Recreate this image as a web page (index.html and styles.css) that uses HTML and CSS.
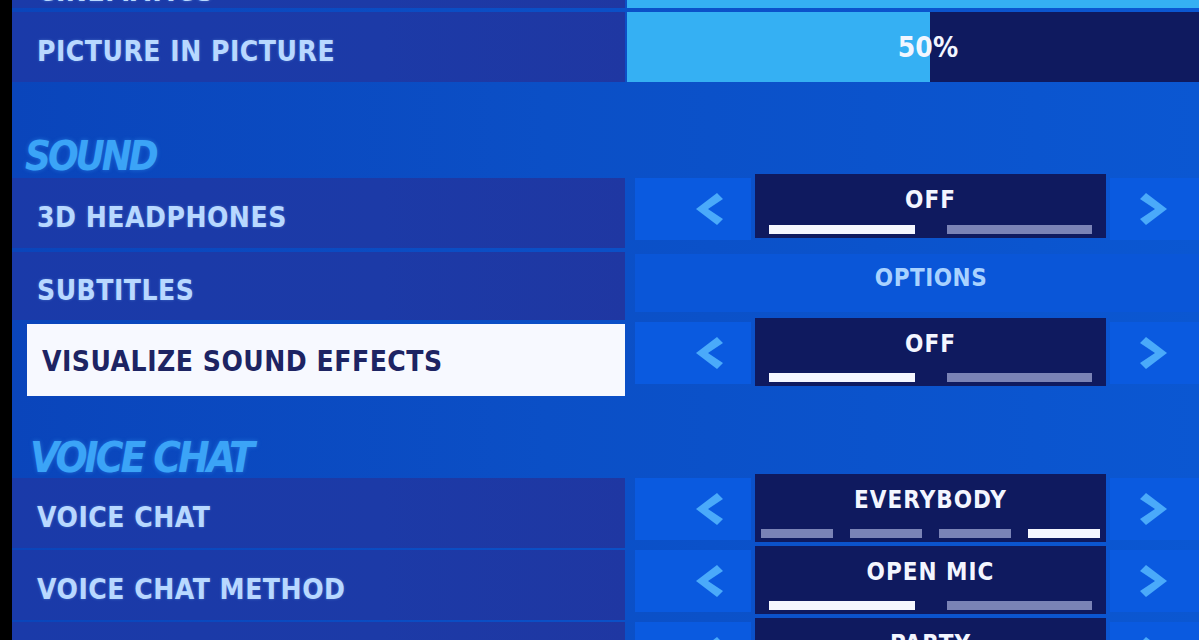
FILE: index.html
```html
<!DOCTYPE html>
<html lang="en">
<head>
<meta charset="utf-8">
<title>Audio Settings</title>
<link rel="stylesheet" href="styles.css">
</head>
<body>
<main class="screen">
  <div class="list">
    <div class="row row-top">
      <div class="label">CINEMATICS</div>
      <div class="slider"><div class="fill" style="width:100%"></div><span class="pct">100%</span></div>
    </div>

    <div class="row">
      <div class="label">PICTURE IN PICTURE</div>
      <div class="slider"><div class="fill" style="width:53%"></div><span class="pct">50%</span></div>
    </div>

    <h2 class="section section-sound">SOUND</h2>

    <div class="row">
      <div class="label">3D HEADPHONES</div>
      <div class="stepper">
        <div class="arrow-box left"><svg class="arrow" viewBox="0 0 28 32"><polygon points="22,0 1,16 22,32 28,26 13,16 28,6"/></svg></div>
        <div class="value">
          <span class="value-text">OFF</span>
          <div class="segs segs-2"><i class="on"></i><i></i></div>
        </div>
        <div class="arrow-box right"><svg class="arrow" viewBox="0 0 28 32"><polygon points="6,0 27,16 6,32 0,26 15,16 0,6"/></svg></div>
      </div>
    </div>

    <div class="row row-sub">
      <div class="label">SUBTITLES</div>
      <div class="button-wrap"><div class="button">OPTIONS</div></div>
    </div>

    <div class="row row-sel">
      <div class="label selected">VISUALIZE SOUND EFFECTS</div>
      <div class="stepper">
        <div class="arrow-box left"><svg class="arrow" viewBox="0 0 28 32"><polygon points="22,0 1,16 22,32 28,26 13,16 28,6"/></svg></div>
        <div class="value">
          <span class="value-text">OFF</span>
          <div class="segs segs-2"><i class="on"></i><i></i></div>
        </div>
        <div class="arrow-box right"><svg class="arrow" viewBox="0 0 28 32"><polygon points="6,0 27,16 6,32 0,26 15,16 0,6"/></svg></div>
      </div>
    </div>

    <h2 class="section section-voice">VOICE CHAT</h2>

    <div class="row row-voice">
      <div class="label">VOICE CHAT</div>
      <div class="stepper">
        <div class="arrow-box left"><svg class="arrow" viewBox="0 0 28 32"><polygon points="22,0 1,16 22,32 28,26 13,16 28,6"/></svg></div>
        <div class="value">
          <span class="value-text">EVERYBODY</span>
          <div class="segs segs-4"><i></i><i></i><i></i><i class="on"></i></div>
        </div>
        <div class="arrow-box right"><svg class="arrow" viewBox="0 0 28 32"><polygon points="6,0 27,16 6,32 0,26 15,16 0,6"/></svg></div>
      </div>
    </div>

    <div class="row row-voice">
      <div class="label">VOICE CHAT METHOD</div>
      <div class="stepper">
        <div class="arrow-box left"><svg class="arrow" viewBox="0 0 28 32"><polygon points="22,0 1,16 22,32 28,26 13,16 28,6"/></svg></div>
        <div class="value">
          <span class="value-text">OPEN MIC</span>
          <div class="segs segs-2"><i class="on"></i><i></i></div>
        </div>
        <div class="arrow-box right"><svg class="arrow" viewBox="0 0 28 32"><polygon points="6,0 27,16 6,32 0,26 15,16 0,6"/></svg></div>
      </div>
    </div>

    <div class="row row-voice">
      <div class="label">DEFAULT VOICE CHANNEL</div>
      <div class="stepper">
        <div class="arrow-box left"><svg class="arrow" viewBox="0 0 28 32"><polygon points="22,0 1,16 22,32 28,26 13,16 28,6"/></svg></div>
        <div class="value">
          <span class="value-text">PARTY</span>
          <div class="segs segs-2"><i class="on"></i><i></i></div>
        </div>
        <div class="arrow-box right"><svg class="arrow" viewBox="0 0 28 32"><polygon points="6,0 27,16 6,32 0,26 15,16 0,6"/></svg></div>
      </div>
    </div>
  </div>
</main>
</body>
</html>
```

FILE: styles.css
```css
html, body {
  margin: 0;
  padding: 0;
  background: #000;
  height: 100%;
  overflow: hidden;
}

body {
  font-family: "DejaVu Sans Condensed", "DejaVu Sans", sans-serif;
  font-stretch: condensed;
  font-weight: bold;
}

.screen {
  margin-left: 12px;
  height: 640px;
  overflow: hidden;
  background: linear-gradient(90deg, #0a45bb 0%, #0b4fc6 45%, #0b57d2 100%);
}

.list {
  margin-top: -62px;
  display: flex;
  flex-direction: column;
}

/* one setting: label on the left, control on the right */
.row {
  display: grid;
  grid-template-columns: 613px 1fr;
  column-gap: 2px;
  height: 70px;
  margin-bottom: 4px;
}

.row-sub { height: 68px; }
.row-sel { height: 72px; margin-bottom: 0; }
.row-voice { margin-bottom: 2px; }

.label {
  display: flex;
  align-items: center;
  padding: 8px 0 0 25px;
  box-sizing: border-box;
  background: linear-gradient(90deg, #1a3aa9 0%, #1c3aa7 60%, #1f37a2 100%);
  color: #b8d8ff;
  font-size: 28px;
  letter-spacing: 0.5px;
  white-space: nowrap;
  text-shadow: 0 0 3px rgba(150, 205, 255, 0.35);
}

/* the row scrolled mostly out of view at the top */
.row-top .label {
  align-items: flex-end;
  line-height: 32px;
}

.label.selected {
  margin-left: 15px;
  padding-left: 15px;
  padding-top: 2px;
  background: #f7f9ff;
  color: #1d2463;
  text-shadow: none;
}

/* volume slider */
.slider {
  position: relative;
  overflow: hidden;
  background: #0f1a5f;
  display: flex;
  align-items: center;
  justify-content: center;
}

.row-top .pct { display: none; }

.fill {
  position: absolute;
  left: 0;
  top: 0;
  bottom: 0;
  background: #35b0f3;
}

.pct {
  position: relative;
  margin-left: 30px;
  color: #f2f6ff;
  font-size: 28px;
}

/* section headings */
.section {
  margin: 0;
  padding: 0 0 0 13px;
  display: flex;
  align-items: flex-end;
  color: #3ba4f7;
  font-size: 40px;
  font-style: italic;
  font-weight: bold;
  line-height: 40px;
  letter-spacing: -3px;
  text-shadow: 0 0 4px rgba(60, 165, 250, 0.45);
}

.section-sound {
  height: 92px;
  padding-bottom: 2px;
  box-sizing: border-box;
}

.section-voice {
  height: 82px;
  padding-left: 18px;
  font-size: 42px;
}

/* arrow stepper */
.stepper {
  display: flex;
  gap: 4px;
  padding-left: 8px;
  height: 64px;
  margin-top: -4px;
}

.row-sel .stepper { height: 68px; margin-top: -6px; }
.row-voice .stepper { height: 68px; margin-top: -4px; }

.arrow-box {
  background: #0a5ae0;
  display: flex;
  align-items: center;
  height: 62px;
  margin-top: 4px;
}

.arrow-box.left {
  width: 116px;
  justify-content: flex-end;
  padding-right: 28px;
  box-sizing: border-box;
}

.arrow-box.right {
  flex: 1;
  padding-left: 30px;
}

.arrow {
  width: 28px;
  height: 32px;
  fill: #4aaafa;
}

.value {
  width: 351px;
  background: #0f1a5f;
  display: flex;
  flex-direction: column;
  align-items: center;
  justify-content: space-between;
  padding: 12px 0 4px;
  box-sizing: border-box;
}

.value-text {
  color: #f3f6ff;
  font-size: 24px;
  line-height: 28px;
  letter-spacing: 1px;
}

.segs {
  align-self: stretch;
  display: flex;
  height: 9px;
}

.segs i {
  flex: 1;
  background: #7a83b6;
}

.segs i.on { background: #f5f7ff; }

.segs-2 { gap: 32px; padding: 0 14px; }
.segs-4 { gap: 17px; padding: 0 6px; }

/* full-width button */
.button-wrap {
  padding-left: 8px;
  padding-top: 2px;
  height: 60px;
}

.button {
  height: 58px;
  background: #0a56d8;
  color: #a8d2ff;
  font-size: 24px;
  letter-spacing: 0.5px;
  display: flex;
  align-items: center;
  justify-content: center;
  padding: 0 0 10px 28px;
  box-sizing: border-box;
}
```
